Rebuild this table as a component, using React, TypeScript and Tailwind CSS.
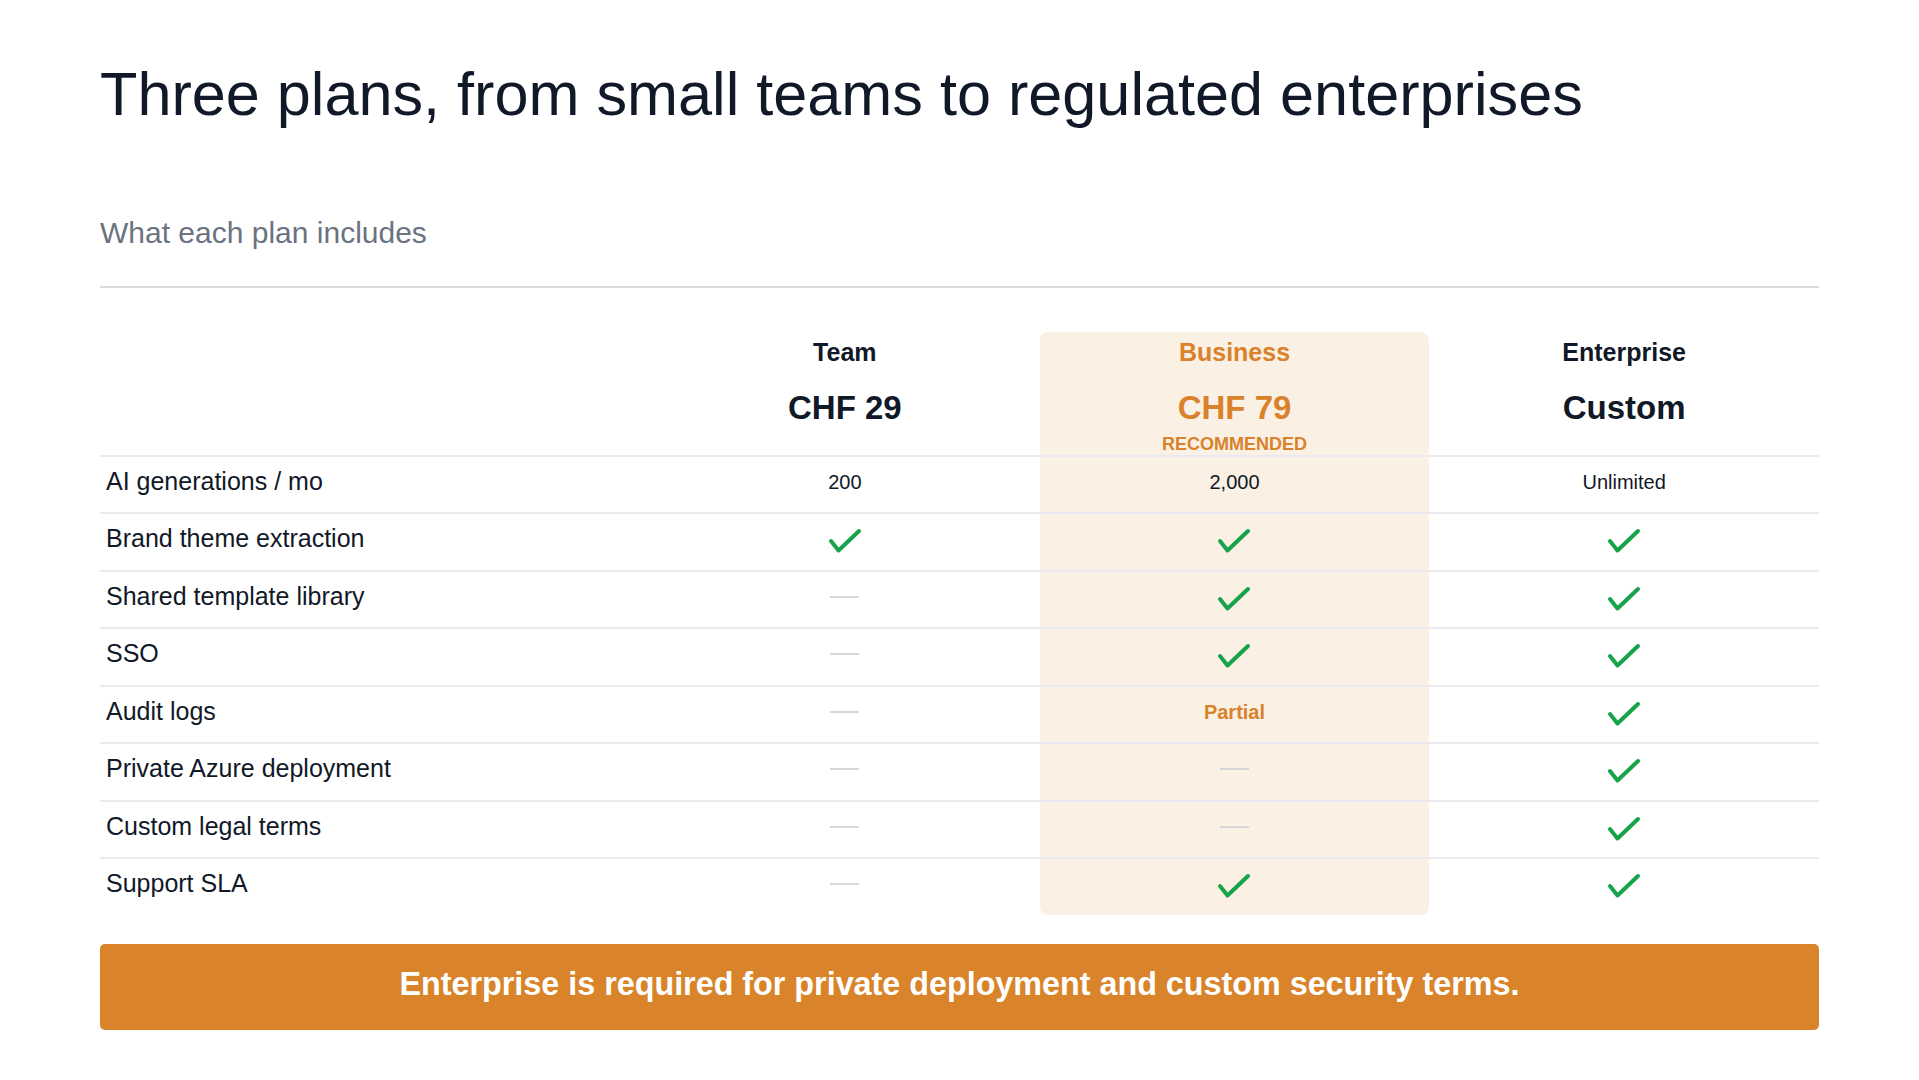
import React from "react";

type Cell = { kind: "text"; value: string } | { kind: "check" } | { kind: "dash" } | { kind: "partial" };

const rows: { label: string; cells: Cell[] }[] = [
  { label: "AI generations / mo", cells: [{ kind: "text", value: "200" }, { kind: "text", value: "2,000" }, { kind: "text", value: "Unlimited" }] },
  { label: "Brand theme extraction", cells: [{ kind: "check" }, { kind: "check" }, { kind: "check" }] },
  { label: "Shared template library", cells: [{ kind: "dash" }, { kind: "check" }, { kind: "check" }] },
  { label: "SSO", cells: [{ kind: "dash" }, { kind: "check" }, { kind: "check" }] },
  { label: "Audit logs", cells: [{ kind: "dash" }, { kind: "partial" }, { kind: "check" }] },
  { label: "Private Azure deployment", cells: [{ kind: "dash" }, { kind: "dash" }, { kind: "check" }] },
  { label: "Custom legal terms", cells: [{ kind: "dash" }, { kind: "dash" }, { kind: "check" }] },
  { label: "Support SLA", cells: [{ kind: "dash" }, { kind: "check" }, { kind: "check" }] },
];

function Check() {
  return (
    <svg width="34" height="26" viewBox="0 0 34 26" fill="none" className="mt-[4px]">
      <path d="M3 13 L10.5 22.5 L31 3" stroke="#16a34a" strokeWidth="4" strokeLinecap="round" strokeLinejoin="round" />
    </svg>
  );
}

function CellContent({ cell }: { cell: Cell }) {
  if (cell.kind === "check") return <Check />;
  if (cell.kind === "dash") return <div className="w-[29px] h-[2px] bg-[#d6d6db]" />;
  if (cell.kind === "partial") return <span className="text-[20px] font-bold text-[#d9822b]">Partial</span>;
  return <span className="text-[20px] text-[#111827]">{cell.value}</span>;
}

export default function App() {
  return (
    <div className="w-[1919px] h-[1080px] bg-white px-[100px] pt-[58px] text-[#111827]" style={{ fontFamily: '"Liberation Sans", Arial, sans-serif' }}>
      <h1 className="text-[61.2px] leading-[1.2] font-normal text-[#111827]">Three plans, from small teams to regulated enterprises</h1>
      <p className="mt-[84px] text-[30px] leading-[36px] text-[#6b7280]">What each plan includes</p>
      <div className="mt-[35px] h-[2px] bg-[#d9dbe0]" />

      <div className="mt-[43.5px]">
        <div className="grid grid-cols-[550px_1fr_1fr_1fr] h-[123px]">
          <div />
          <div className="flex flex-col items-center pt-[5.5px]">
            <div className="text-[25px] leading-[1.2] font-bold">Team</div>
            <div className="mt-[20.5px] text-[33px] leading-[1.2] font-bold">CHF 29</div>
          </div>
          <div className="flex flex-col items-center pt-[5.5px] bg-[#faf0e4] rounded-t-[8px]">
            <div className="text-[25px] leading-[1.2] font-bold text-[#d9822b]">Business</div>
            <div className="mt-[20.5px] text-[33px] leading-[1.2] font-bold text-[#d9822b]">CHF 79</div>
            <div className="mt-[6px] text-[18px] leading-[1.2] font-bold text-[#d9822b]">RECOMMENDED</div>
          </div>
          <div className="flex flex-col items-center pt-[5.5px]">
            <div className="text-[25px] leading-[1.2] font-bold">Enterprise</div>
            <div className="mt-[20.5px] text-[33px] leading-[1.2] font-bold">Custom</div>
          </div>
        </div>

        {rows.map((row, i) => (
          <div key={row.label} className="grid grid-cols-[550px_1fr_1fr_1fr] h-[57.5px] border-t-2 border-[#e9e9ef]">
            <div className="flex items-center pl-1.5 pb-[6px] text-[25px] text-[#111827]">{row.label}</div>
            <div className="flex items-center justify-center pb-[6px]">
              <CellContent cell={row.cells[0]} />
            </div>
            <div className={`flex items-center justify-center pb-[6px] bg-[#faf0e4] ${i === rows.length - 1 ? "rounded-b-[8px]" : ""}`}>
              <CellContent cell={row.cells[1]} />
            </div>
            <div className="flex items-center justify-center pb-[6px]">
              <CellContent cell={row.cells[2]} />
            </div>
          </div>
        ))}
      </div>

      <div className="mt-[29px] h-[86px] rounded-[5px] bg-[#d9842a] flex items-center justify-center pb-[5px]">
        <span className="text-[32.3px] font-bold text-white">Enterprise is required for private deployment and custom security terms.</span>
      </div>
    </div>
  );
}
